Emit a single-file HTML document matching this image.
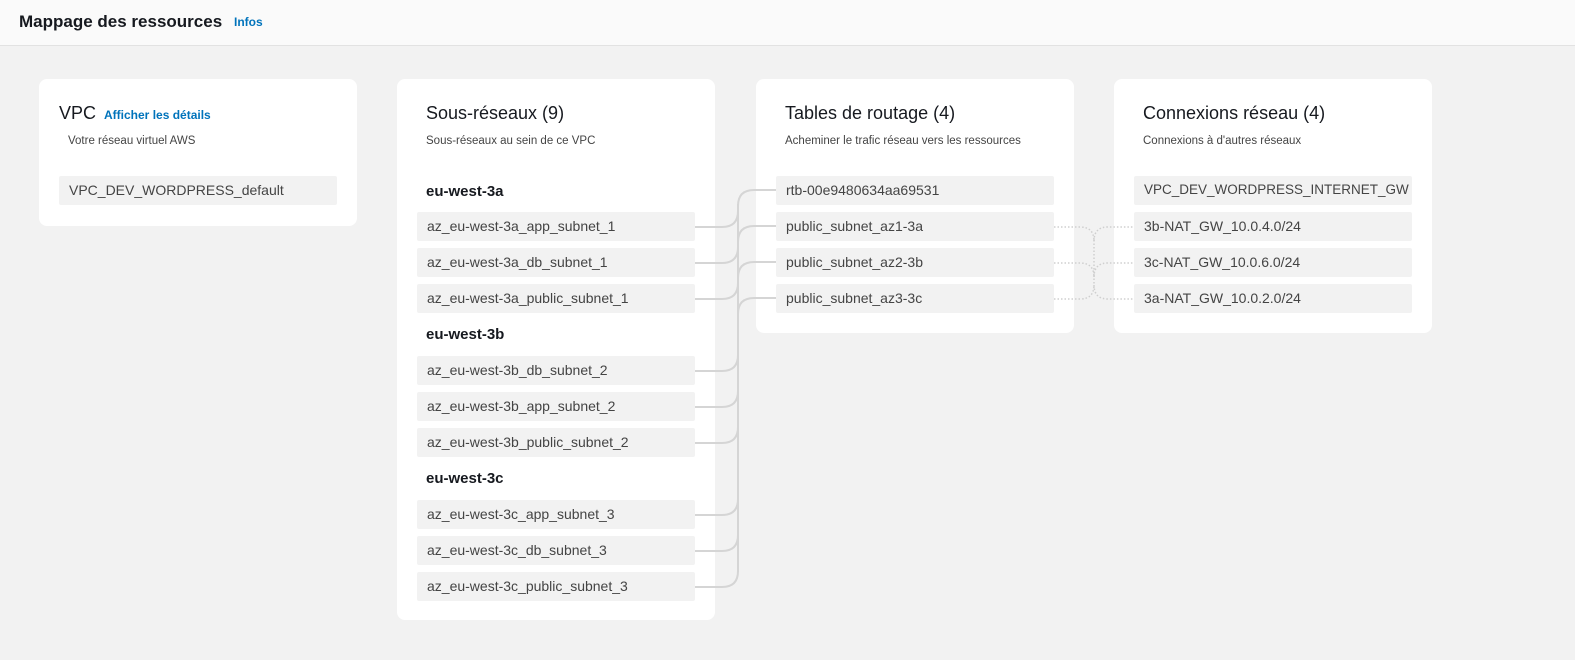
<!DOCTYPE html>
<html style="overflow:hidden"><head><meta charset="utf-8"><style>
*{box-sizing:border-box;margin:0;padding:0}
html,body{overflow:hidden}
body{width:1575px;height:660px;background:#f2f2f2;font-family:"Liberation Sans","DejaVu Sans",sans-serif;position:relative;color:#16191f}
.hdr{position:absolute;left:0;top:0;width:1575px;height:46px;background:#fafafa;border-bottom:1px solid #e2e2e2}
.hdr h1{position:absolute;left:19px;top:12px;font-size:17px;font-weight:bold;color:#16191f}
.hdr a{position:absolute;left:234px;top:15px;font-size:12px;font-weight:bold;color:#0073bb}
.card{position:absolute;background:#fff;border-radius:8px;top:79px;width:318px}
.t{position:absolute;left:29px;top:24px;font-size:18px;color:#16191f}
.s{position:absolute;left:29px;top:56px;font-size:11.5px;color:#444}
.it{position:absolute;left:20px;width:278px;height:29px;background:#f2f2f2;border-radius:2px;font-size:14px;color:#444;padding:6px 0 0 10px;white-space:nowrap;overflow:hidden}
.g{position:absolute;left:29px;font-size:15px;font-weight:bold;color:#16191f}
svg{position:absolute;left:0;top:0}
</style></head><body>
<div class="hdr"><h1>Mappage des ressources</h1><a>Infos</a></div>

<div class="card" style="left:39px;height:147px">
<div class="t" style="left:20px">VPC <span style="font-size:12px;font-weight:bold;color:#0073bb;margin-left:3px">Afficher les détails</span></div>
<div class="s">Votre réseau virtuel AWS</div>
<div class="it" style="top:97px">VPC_DEV_WORDPRESS_default</div>
</div>

<div class="card" style="left:397px;height:541px">
<div class="t">Sous-réseaux (9)</div>
<div class="s">Sous-réseaux au sein de ce VPC</div>
<div class="g" style="top:104px">eu-west-3a</div>
<div class="it" style="top:133px">az_eu-west-3a_app_subnet_1</div>
<div class="it" style="top:169px">az_eu-west-3a_db_subnet_1</div>
<div class="it" style="top:205px">az_eu-west-3a_public_subnet_1</div>
<div class="g" style="top:247px">eu-west-3b</div>
<div class="it" style="top:277px">az_eu-west-3b_db_subnet_2</div>
<div class="it" style="top:313px">az_eu-west-3b_app_subnet_2</div>
<div class="it" style="top:349px">az_eu-west-3b_public_subnet_2</div>
<div class="g" style="top:391px">eu-west-3c</div>
<div class="it" style="top:421px">az_eu-west-3c_app_subnet_3</div>
<div class="it" style="top:457px">az_eu-west-3c_db_subnet_3</div>
<div class="it" style="top:493px">az_eu-west-3c_public_subnet_3</div>
</div>

<div class="card" style="left:756px;height:254px">
<div class="t">Tables de routage (4)</div>
<div class="s">Acheminer le trafic réseau vers les ressources</div>
<div class="it" style="top:97px">rtb-00e9480634aa69531</div>
<div class="it" style="top:133px">public_subnet_az1-3a</div>
<div class="it" style="top:169px">public_subnet_az2-3b</div>
<div class="it" style="top:205px">public_subnet_az3-3c</div>
</div>

<div class="card" style="left:1114px;height:254px">
<div class="t">Connexions réseau (4)</div>
<div class="s">Connexions à d'autres réseaux</div>
<div class="it" style="top:97px;font-size:13.5px">VPC_DEV_WORDPRESS_INTERNET_GW</div>
<div class="it" style="top:133px">3b-NAT_GW_10.0.4.0/24</div>
<div class="it" style="top:169px">3c-NAT_GW_10.0.6.0/24</div>
<div class="it" style="top:205px">3a-NAT_GW_10.0.2.0/24</div>
</div>

<svg width="1575" height="660" fill="none">
<g stroke="#d5d5d5" stroke-width="2">
<path d="M738 204 V572"/>
<path d="M695 227 H722 Q738 227 738 211"/>
<path d="M695 263 H722 Q738 263 738 247"/>
<path d="M695 299 H722 Q738 299 738 283"/>
<path d="M695 371 H722 Q738 371 738 355"/>
<path d="M695 407 H722 Q738 407 738 391"/>
<path d="M695 443 H722 Q738 443 738 427"/>
<path d="M695 515 H722 Q738 515 738 499"/>
<path d="M695 551 H722 Q738 551 738 535"/>
<path d="M695 587 H722 Q738 587 738 571"/>
<path d="M738 206 Q738 190 754 190 H776"/>
<path d="M738 242 Q738 226 754 226 H776"/>
<path d="M738 278 Q738 262 754 262 H776"/>
<path d="M738 314 Q738 298 754 298 H776"/>
</g>
<g stroke="#cfcfcf" stroke-width="1.5" stroke-dasharray="1.5 2">
<path d="M1094 240 V284"/>
<path d="M1054 227 H1080 Q1094 227 1094 241"/>
<path d="M1054 263 H1080 Q1094 263 1094 277"/>
<path d="M1054 299 H1080 Q1094 299 1094 285"/>
<path d="M1094 241 Q1094 227 1108 227 H1134"/>
<path d="M1094 277 Q1094 263 1108 263 H1134"/>
<path d="M1094 285 Q1094 299 1108 299 H1134"/>
</g>
</svg>
</body></html>
